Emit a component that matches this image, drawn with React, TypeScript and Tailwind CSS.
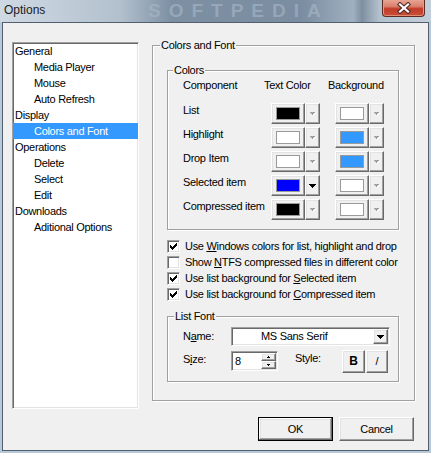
import React from "react";

const raised =
  "bg-[#f0f0f0] border border-t-white border-l-white border-r-[#696969] border-b-[#696969] shadow-[inset_-1px_-1px_0_#a0a0a0,inset_1px_1px_0_#e3e3e3]";
const sunken =
  "border border-t-[#a0a0a0] border-l-[#a0a0a0] border-r-white border-b-white shadow-[inset_1px_1px_0_#696969,inset_-1px_-1px_0_#e3e3e3]";
const etched = "relative border border-[#a0a0a0] shadow-[1px_1px_0_#fff,inset_1px_1px_0_#fff]";

const tree = [
  { label: "General", child: false },
  { label: "Media Player", child: true },
  { label: "Mouse", child: true },
  { label: "Auto Refresh", child: true },
  { label: "Display", child: false },
  { label: "Colors and Font", child: true, selected: true },
  { label: "Operations", child: false },
  { label: "Delete", child: true },
  { label: "Select", child: true },
  { label: "Edit", child: true },
  { label: "Downloads", child: false },
  { label: "Aditional Options", child: true },
];

const colorRows = [
  { label: "List", text: "bg-black", back: "bg-white" },
  { label: "Highlight", text: "bg-white", back: "bg-[#3399ff]" },
  { label: "Drop Item", text: "bg-white", back: "bg-[#3399ff]" },
  { label: "Selected item", text: "bg-[#0000ff]", back: "bg-white", active: true },
  { label: "Compressed item", text: "bg-black", back: "bg-white" },
];

function Arrow({ active }: { active?: boolean }) {
  if (active) {
    return (
      <svg width="7" height="4" viewBox="0 0 7 4" shapeRendering="crispEdges">
        <rect x="0" y="0" width="7" height="1" fill="#000" />
        <rect x="1" y="1" width="5" height="1" fill="#000" />
        <rect x="2" y="2" width="3" height="1" fill="#000" />
        <rect x="3" y="3" width="1" height="1" fill="#000" />
      </svg>
    );
  }
  return (
    <svg width="6" height="4" viewBox="0 0 6 4" shapeRendering="crispEdges" className="mt-[1px]">
      <rect x="1" y="1" width="5" height="1" fill="#fff" />
      <rect x="2" y="2" width="3" height="1" fill="#fff" />
      <rect x="3" y="3" width="1" height="1" fill="#fff" />
      <rect x="0" y="0" width="5" height="1" fill="#a0a0a0" />
      <rect x="1" y="1" width="3" height="1" fill="#a0a0a0" />
      <rect x="2" y="2" width="1" height="1" fill="#a0a0a0" />
    </svg>
  );
}

function ColorPicker({ swatch, active }: { swatch: string; active?: boolean }) {
  return (
    <div className="flex h-[21px]">
      <div className={`${raised} w-[34px] h-full flex items-center justify-center`}>
        <div className={`w-[24px] h-[13px] border border-[#9a9a9a] ${swatch}`} />
      </div>
      <div className={`${raised} w-[15px] h-full flex items-center justify-center`}>
        <Arrow active={active} />
      </div>
    </div>
  );
}

function CheckMark() {
  const px: [number, number, number][] = [
    [6, 0, 1],
    [5, 1, 2],
    [0, 2, 1],
    [4, 2, 3],
    [0, 3, 2],
    [3, 3, 3],
    [0, 4, 5],
    [1, 5, 3],
    [2, 6, 1],
  ];
  return (
    <svg width="7" height="7" viewBox="0 0 7 7" shapeRendering="crispEdges">
      {px.map(([x, y, w], i) => (
        <rect key={i} x={x} y={y} width={w} height="1" fill="#000" />
      ))}
    </svg>
  );
}

function Check({ checked, children }: { checked?: boolean; children: React.ReactNode }) {
  return (
    <div className="flex items-center h-[16px]">
      <div className={`${sunken} w-[13px] h-[13px] bg-white flex items-center justify-center`}>
        {checked && <CheckMark />}
      </div>
      <span className="ml-[5px]">{children}</span>
    </div>
  );
}

function Title({ children, className }: { children: React.ReactNode; className: string }) {
  return <span className={`absolute -top-[7px] px-[1px] bg-[#f0f0f0] ${className}`}>{children}</span>;
}

function Spin() {
  return (
    <div className="flex flex-col w-[15px] h-full">
      <div className={`${raised} h-1/2 flex items-center justify-center`}>
        <svg width="3" height="2" viewBox="0 0 3 2" shapeRendering="crispEdges">
          <rect x="1" y="0" width="1" height="1" fill="#000" />
          <rect x="0" y="1" width="3" height="1" fill="#000" />
        </svg>
      </div>
      <div className={`${raised} h-1/2 flex items-center justify-center`}>
        <svg width="3" height="2" viewBox="0 0 3 2" shapeRendering="crispEdges">
          <rect x="0" y="0" width="3" height="1" fill="#000" />
          <rect x="1" y="1" width="1" height="1" fill="#000" />
        </svg>
      </div>
    </div>
  );
}

export default function App() {
  return (
    <div className="w-[431px] h-[453px] flex flex-col bg-[#b7c8d8] font-['Liberation_Sans',Arial,sans-serif] text-black overflow-hidden">
      {/* title bar */}
      <div className="relative h-[22px] shrink-0 flex items-start justify-between bg-[linear-gradient(90deg,#cfd9e3_0%,#c3cfdb_12%,#b2c0cd_28%,#7c8fa3_40%,#7a8da1_70%,#9fb0c0_82%,#7f8fa0_84%,#b3c1ce_88%,#c3cfda_100%)]">
        <span className="absolute left-[148px] top-[1px] text-[19px] font-bold tracking-[8px] leading-[20px] text-[#a9b8c7] opacity-60 select-none">
          SOFTPEDIA
        </span>
        <span className="relative pl-[4px] pt-[3px] text-[12px] leading-[14px] text-[#1b1b1b]">Options</span>
        <div className="relative mr-[6px] w-[43px] h-[17px] rounded-b-[4px] border border-t-0 border-[#5e2a22] bg-[linear-gradient(180deg,#e7a594_0%,#d9806c_40%,#c13b28_55%,#c9503a_100%)] shadow-[inset_0_-1px_0_#e08a70,inset_1px_0_0_#e59a85,inset_-1px_0_0_#e59a85] flex items-center justify-center">
          <svg width="14" height="12" viewBox="0 0 14 12">
            <path d="M3 2.5 L11 9.5 M11 2.5 L3 9.5" stroke="#4a2a26" strokeWidth="4.2" strokeLinecap="square" />
            <path d="M3 2.5 L11 9.5 M11 2.5 L3 9.5" stroke="#fff" strokeWidth="2.2" strokeLinecap="square" />
          </svg>
        </div>
      </div>

      {/* client area */}
      <div className="mx-[2px] mb-[2px] flex-1 border border-[#52606d] bg-[#f0f0f0] text-[11px] leading-[13px] tracking-[-0.3px] flex flex-col pt-[19px] pl-[9px] pr-[13px]">
        <div className="flex items-start">
          <div className={`${sunken} w-[127px] h-[367px] bg-white`}>
            {tree.map((t) => (
              <div
                key={t.label}
                className={`h-[16px] flex items-center ${t.child ? "pl-[21px]" : "pl-[2px]"} ${
                  t.selected ? "bg-[#3399ff] text-white" : ""
                }`}
              >
                {t.label}
              </div>
            ))}
          </div>

          <div className={`${etched} ml-[13px] mt-[3px] w-[263px] h-[356px] pl-[14px] pt-[24px]`}>
            <Title className="left-[7px]">Colors and Font</Title>

            <div className={`${etched} w-[232px] h-[160px] pt-[8px] pl-[15px]`}>
              <Title className="left-[5px]">Colors</Title>
              <div className="flex h-[13px]">
                <span className="w-[81px]">Component</span>
                <span className="w-[64px]">Text Color</span>
                <span>Background</span>
              </div>
              <div className="mt-[11px] flex flex-col">
                {colorRows.map((r) => (
                  <div key={r.label} className="h-[24px] flex items-start">
                    <span className="w-[88px] mt-[1px]">{r.label}</span>
                    <ColorPicker swatch={r.text} active={r.active} />
                    <div className="ml-[15px]">
                      <ColorPicker swatch={r.back} />
                    </div>
                  </div>
                ))}
              </div>
            </div>

            <div className="mt-[8px] flex flex-col">
              <Check checked>
                Use <u>W</u>indows colors for list, highlight and drop
              </Check>
              <Check>
                Show <u>N</u>TFS compressed files in different color
              </Check>
              <Check checked>
                Use list background for <u>S</u>elected item
              </Check>
              <Check checked>
                Use list background for <u>C</u>ompressed item
              </Check>
            </div>

            <div className={`${etched} mt-[14px] w-[232px] h-[66px] pt-[10px] pl-[15px]`}>
              <Title className="left-[6px]">List Font</Title>
              <div className="flex items-center h-[19px]">
                <span className="w-[48px]">
                  N<u>a</u>me:
                </span>
                <div className={`${sunken} bg-white w-[159px] h-[19px] p-[1px] flex items-center`}>
                  <span className="flex-1 pl-[28px]">MS Sans Serif</span>
                  <div className={`${raised} w-[15px] h-full flex items-center justify-center`}>
                    <Arrow active />
                  </div>
                </div>
              </div>
              <div className="mt-[4px] flex items-start">
                <span className="w-[48px] mt-[3px]">
                  S<u>i</u>ze:
                </span>
                <div className={`${sunken} bg-white w-[47px] h-[20px] mt-[1px] p-[1px] flex`}>
                  <span className="flex-1 pl-[2px] self-center">8</span>
                  <Spin />
                </div>
                <span className="ml-[17px] w-[47px] mt-[2px]">Style:</span>
                <div className={`${raised} w-[23px] h-[23px] flex items-center justify-center font-bold text-[12px]`}>B</div>
                <div className={`${raised} ml-[1px] w-[22px] h-[23px] flex items-center justify-center`}>/</div>
              </div>
            </div>
          </div>
        </div>

        <div className="mt-[8px] flex justify-end gap-[6px] pr-[1px]">
          <button className="w-[75px] h-[24px] bg-[#f0f0f0] border border-black shadow-[inset_-1px_-1px_0_#696969,inset_1px_1px_0_#fff,inset_-2px_-2px_0_#a0a0a0,inset_2px_2px_0_#e3e3e3]">
            OK
          </button>
          <button className={`${raised} w-[75px] h-[24px]`}>Cancel</button>
        </div>
      </div>
    </div>
  );
}
